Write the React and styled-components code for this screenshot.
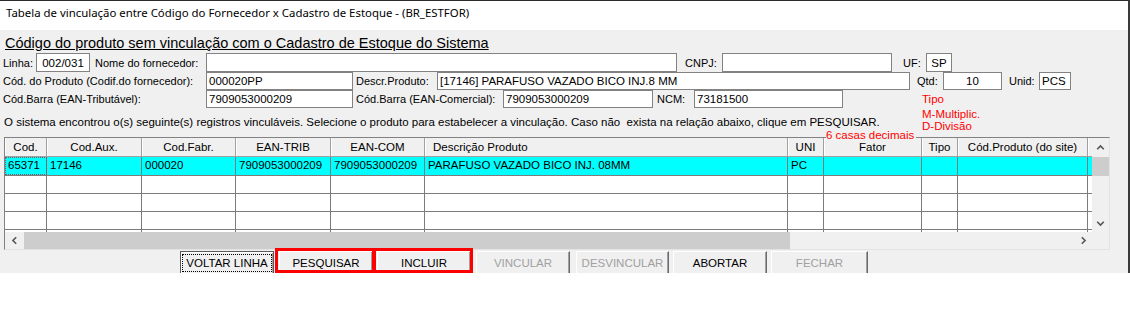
import React from 'react';
import styled, { createGlobalStyle, css } from 'styled-components';

const GlobalStyle = createGlobalStyle`
  html, body { margin: 0; padding: 0; background: #ffffff; }
  body { font-family: "Liberation Sans", Arial, sans-serif; color: #000; }
  #root { width: 1130px; }
`;

const Window = styled.div`
  position: relative;
  box-sizing: border-box;
  width: 1130px;
  height: 273px;
  border-top: 1px solid #2b2b2b;
  border-right: 2px solid #3a3a3a;
  background: #f0f0f0;
  overflow: hidden;
  display: flex;
  flex-direction: column;
`;

const TitleBar = styled.div`
  flex: none;
  height: 29px;
  box-sizing: border-box;
  padding: 4px 0 0 6px;
  background: #ffffff;
  font-family: "Noto Sans", "Liberation Sans", sans-serif;
  font-size: 11.4px;
  line-height: 16px;
  white-space: nowrap;
`;

const Body = styled.div`
  display: flex;
  flex-direction: column;
`;

const SectionTitle = styled.div`
  margin-top: 5px;
  height: 16px;
  padding-left: 5px;
  font-size: 14.5px;
  line-height: 16px;
  text-decoration: underline;
  white-space: nowrap;
`;

const FormRow = styled.div`
  display: flex;
  align-items: center;
  height: ${p => p.$h}px;
  margin-top: ${p => p.$mt || 0}px;
  padding-left: 3px;
`;

const Label = styled.span`
  flex: none;
  width: ${p => p.$w}px;
  margin-left: ${p => p.$ml || 0}px;
  font-size: 11px;
  line-height: 14px;
  white-space: nowrap;
`;

const Field = styled.div`
  flex: none;
  box-sizing: border-box;
  width: ${p => p.$w}px;
  height: 100%;
  border: 1px solid #828282;
  background: #ffffff;
  padding: 0 ${p => (p.$center ? 0 : 2)}px;
  display: flex;
  align-items: center;
  justify-content: ${p => (p.$center ? 'center' : 'flex-start')};
  font-size: 11.5px;
  white-space: nowrap;
  overflow: hidden;
`;

const InfoText = styled.div`
  margin-top: 7px;
  height: 14px;
  padding-left: 4px;
  font-size: 11.5px;
  line-height: 14px;
  white-space: pre;
`;

const Hint = styled.div`
  position: absolute;
  top: ${p => p.$top}px;
  left: ${p => p.$left}px;
  padding-right: 2px;
  background: #f0f0f0;
  color: #ff0000;
  font-size: 11.5px;
  line-height: 13px;
  white-space: nowrap;
`;

const GridFrame = styled.div`
  margin: 8px 0 0 4px;
  box-sizing: border-box;
  width: 1106px;
  height: 113px;
  border-top: 1px solid #828282;
  border-left: 1px solid #828282;
  border-right: 1px solid #e3e3e3;
  border-bottom: 1px solid #e3e3e3;
  display: grid;
  grid-template-columns: 1087px 17px;
  grid-template-rows: 94px 17px;
`;

const Viewport = styled.div`
  overflow: hidden;
  background: #ffffff;
`;

const COLS = [42, 95, 94, 95, 94, 363, 36, 98, 36, 130];
const colTemplate = COLS.map(c => `${c}px`).join(' ') + ' 1fr';

const HeaderRow = styled.div`
  display: grid;
  grid-template-columns: ${colTemplate};
  height: 19px;
  box-sizing: border-box;
  border-bottom: 1px solid #a0a0a0;
  background: #f0f0f0;
`;

const HeaderCell = styled.div`
  box-sizing: border-box;
  border-right: ${p => (p.$last ? 'none' : '1px solid #a0a0a0')};
  box-shadow: inset 1px 0 #ffffff;
  padding-left: ${p => (p.$left ? 8 : 0)}px;
  text-align: ${p => (p.$left ? 'left' : 'center')};
  font-size: 11.5px;
  line-height: 18px;
  white-space: nowrap;
  overflow: hidden;
`;

const DataRow = styled.div`
  display: grid;
  grid-template-columns: ${colTemplate};
  height: ${p => p.$h}px;
  box-sizing: border-box;
  border-bottom: 1px solid #7c7c7c;
  background: ${p => (p.$selected ? '#00ffff' : '#ffffff')};
`;

const Cell = styled.div`
  box-sizing: border-box;
  border-right: ${p => (p.$last ? 'none' : '1px solid #7c7c7c')};
  padding-left: 3px;
  font-size: 11.5px;
  line-height: 17px;
  white-space: nowrap;
  overflow: hidden;
  ${p => p.$focus && css`
    outline: 1px dotted #9a4a4a;
    outline-offset: -1px;
  `}
`;

const VScroll = styled.div`
  background: #f0f0f0;
  display: flex;
  flex-direction: column;
`;

const HScroll = styled.div`
  background: #f0f0f0;
  display: flex;
`;

const ArrowBox = styled.div`
  flex: none;
  width: ${p => p.$w}px;
  height: ${p => p.$h}px;
  display: flex;
  align-items: center;
  justify-content: center;
`;

const Thumb = styled.div`
  flex: none;
  width: ${p => p.$w}px;
  height: ${p => p.$h}px;
  margin-left: ${p => p.$ml || 0}px;
  background: #cdcdcd;
`;

const Spacer = styled.div`
  flex: 1;
`;

const Corner = styled.div`
  background: #f0f0f0;
`;

const ChevronSvg = styled.svg`
  display: block;
  transform: rotate(${p => p.$rot}deg);
`;

const Chevron = ({ rot }) => (
  <ChevronSvg $rot={rot} width="9" height="9" viewBox="0 0 9 9">
    <path d="M1.2 6.2 L4.5 2.9 L7.8 6.2" fill="none" stroke="#555555" strokeWidth="1.6" />
  </ChevronSvg>
);

const ButtonBar = styled.div`
  display: flex;
  margin-top: 1px;
  padding-left: 180px;
`;

const Button = styled.div`
  position: relative;
  flex: none;
  box-sizing: border-box;
  width: ${p => p.$w}px;
  height: 26px;
  margin-left: ${p => p.$ml || 0}px;
  padding-top: 4px;
  background: #f0f0f0;
  border-top: 1px solid #ffffff;
  border-left: 1px solid #ffffff;
  border-right: 1px solid #696969;
  border-bottom: 1px solid #696969;
  box-shadow: inset -1px -1px #a0a0a0;
  text-align: center;
  font-size: 11.5px;
  line-height: 14px;
  white-space: nowrap;
  color: ${p => (p.$disabled ? '#a0a0a0' : '#000000')};
  ${p => p.$default && css`
    border: 1px solid #5a5a5a;
    box-shadow: inset 1px 1px #ffffff, inset -1px -1px #a0a0a0;
  `}
  ${p => p.$marked && css`
    &::after {
      content: '';
      position: absolute;
      top: -4px;
      left: -5px;
      right: -3px;
      height: 25px;
      border: 3px solid #ff0000;
      box-sizing: border-box;
      pointer-events: none;
    }
  `}
`;

const FocusText = styled.span`
  display: inline-block;
  padding: 0 2px;
  outline: 1px dotted #000000;
  outline-offset: 1px;
`;

const headers = [
  { t: 'Cod.' }, { t: 'Cod.Aux.' }, { t: 'Cod.Fabr.' }, { t: 'EAN-TRIB' }, { t: 'EAN-COM' },
  { t: 'Descrição Produto', left: true }, { t: 'UNI' }, { t: 'Fator' }, { t: 'Tipo' },
  { t: 'Cód.Produto (do site)' },
];

const firstRow = ['65371', '17146', '000020', '7909053000209', '7909053000209',
  'PARAFUSO VAZADO BICO INJ. 08MM', 'PC', '', '', ''];

const emptyRow = ['', '', '', '', '', '', '', '', '', ''];

const renderCells = (vals, focusFirst) => (
  <>
    {vals.map((v, i) => (
      <Cell key={i} $focus={focusFirst && i === 0}>{v}</Cell>
    ))}
    <Cell $last />
  </>
);

export default function App() {
  return (
    <>
      <GlobalStyle />
      <Window>
        <TitleBar>Tabela de vinculação entre Código do Fornecedor x Cadastro de Estoque - (BR_ESTFOR)</TitleBar>
        <Body>
          <SectionTitle>Código do produto sem vinculação com o Cadastro de Estoque do Sistema</SectionTitle>

          <FormRow $h={19} $mt={2}>
            <Label $w={33}>Linha:</Label>
            <Field $w={54} $center>002/031</Field>
            <Label $w={111} $ml={5}>Nome do fornecedor:</Label>
            <Field $w={471} />
            <Label $w={37} $ml={8}>CNPJ:</Label>
            <Field $w={170} />
            <Label $w={23} $ml={11}>UF:</Label>
            <Field $w={26} $center>SP</Field>
          </FormRow>

          <FormRow $h={18}>
            <Label $w={203}>Cód. do Produto (Codif.do fornecedor):</Label>
            <Field $w={147}>000020PP</Field>
            <Label $w={81} $ml={3}>Descr.Produto:</Label>
            <Field $w={473}>[17146] PARAFUSO VAZADO BICO INJ.8 MM</Field>
            <Label $w={26} $ml={7}>Qtd:</Label>
            <Field $w={59} $center>10</Field>
            <Label $w={30} $ml={7}>Unid:</Label>
            <Field $w={32}>PCS</Field>
          </FormRow>

          <FormRow $h={18}>
            <Label $w={203}>Cód.Barra (EAN-Tributável):</Label>
            <Field $w={147}>7909053000209</Field>
            <Label $w={147} $ml={3}>Cód.Barra (EAN-Comercial):</Label>
            <Field $w={150}>7909053000209</Field>
            <Label $w={37} $ml={4}>NCM:</Label>
            <Field $w={149}>73181500</Field>
          </FormRow>

          <InfoText>{'O sistema encontrou o(s) seguinte(s) registros vinculáveis. Selecione o produto para estabelecer a vinculação. Caso não  exista na relação abaixo, clique em PESQUISAR.'}</InfoText>

          <GridFrame>
            <Viewport>
              <HeaderRow>
                {headers.map((h, i) => (
                  <HeaderCell key={i} $left={h.left}>{h.t}</HeaderCell>
                ))}
                <HeaderCell $last />
              </HeaderRow>
              <DataRow $h={19} $selected>{renderCells(firstRow, true)}</DataRow>
              <DataRow $h={18}>{renderCells(emptyRow)}</DataRow>
              <DataRow $h={18}>{renderCells(emptyRow)}</DataRow>
              <DataRow $h={18}>{renderCells(emptyRow)}</DataRow>
              <DataRow $h={18}>{renderCells(emptyRow)}</DataRow>
            </Viewport>
            <VScroll>
              <ArrowBox $w={17} $h={19}><Chevron rot={0} /></ArrowBox>
              <Thumb $w={17} $h={19} />
              <Spacer />
              <ArrowBox $w={17} $h={17}><Chevron rot={180} /></ArrowBox>
            </VScroll>
            <HScroll>
              <ArrowBox $w={18} $h={17}><Chevron rot={-90} /></ArrowBox>
              <Thumb $w={766} $h={17} $ml={1} />
              <Spacer />
              <ArrowBox $w={17} $h={17}><Chevron rot={90} /></ArrowBox>
            </HScroll>
            <Corner />
          </GridFrame>

          <ButtonBar>
            <Button $w={94} $default><FocusText>VOLTAR LINHA</FocusText></Button>
            <Button $w={94} $ml={5} $marked>PESQUISAR</Button>
            <Button $w={94} $ml={4} $marked>INCLUIR</Button>
            <Button $w={94} $ml={5} $disabled>VINCULAR</Button>
            <Button $w={93} $ml={6} $disabled>DESVINCULAR</Button>
            <Button $w={94} $ml={4}>ABORTAR</Button>
            <Button $w={97} $ml={4} $disabled>FECHAR</Button>
          </ButtonBar>
        </Body>

        <Hint $top={92} $left={922}>Tipo</Hint>
        <Hint $top={107} $left={922}>M-Multiplic.</Hint>
        <Hint $top={119} $left={922}>D-Divisão</Hint>
        <Hint $top={128} $left={826}>6 casas decimais</Hint>
      </Window>
    </>
  );
}
